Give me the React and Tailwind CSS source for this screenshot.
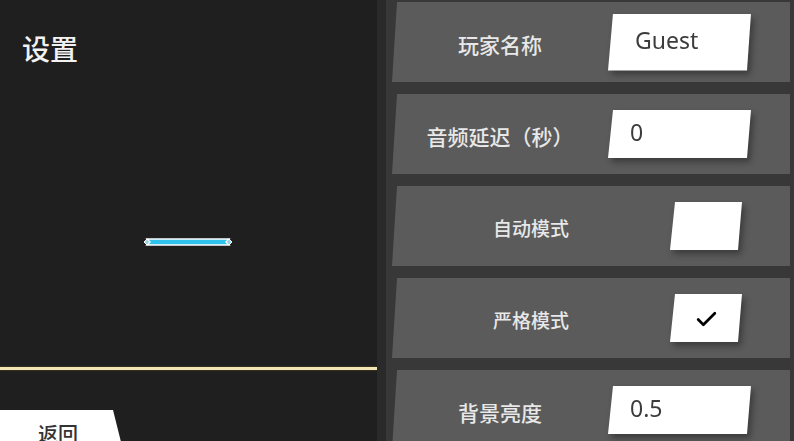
import React from "react";
import { Check } from "lucide-react";

const SlantBox = ({ className = "", children }) => (
  <div className="drop-shadow-[3px_4px_3px_rgba(0,0,0,0.35)]">
    <div
      className={`bg-white [clip-path:polygon(5px_0,100%_0,calc(100%-4px)_100%,0_100%)] flex items-center ${className}`}
    >
      {children}
    </div>
  </div>
);

const Row = ({ label, children, small, right = "mr-[39px]" }) => (
  <div className="h-[80px] shrink-0 ml-[6px] mr-[4px] bg-[#5b5b5b] [clip-path:polygon(5px_0,100%_0,100%_100%,0_100%)] flex items-center">
    <div
      className={`flex-1 text-center ${small ? "text-[19px]" : "text-[21px]"} leading-[24px] font-medium text-[#e8e8e8] pt-[4px]`}
    >
      {label}
    </div>
    <div className={right}>{children}</div>
  </div>
);

const TextField = ({ value, tall }) => (
  <SlantBox className={`w-[143px] ${tall ? "h-[57px] pl-[27px]" : "h-[48px] pl-[22px]"}`}>
    <span className="text-[23px] leading-[26px] text-[#3c3c3c] font-['Noto_Sans',sans-serif] -mt-[5px]">
      {value}
    </span>
  </SlantBox>
);

const Toggle = ({ checked }) => (
  <SlantBox className="w-[72px] h-[48px] justify-center">
    {checked && <Check size={25} strokeWidth={2.6} className="text-black mt-[2px]" />}
  </SlantBox>
);

function Bar() {
  return (
    <svg width="94" height="12" viewBox="0 0 94 12">
      <path d="M6 3 H88 L85 6 L88 9 H6 L9 6 Z" fill="#2ec2ec" stroke="#ffffff" strokeWidth="1.4" />
      <path d="M3 6 L6 3 L9 6 L6 9 Z" fill="#9fd4e4" stroke="#ffffff" strokeWidth="1" />
      <path d="M85 6 L88 3 L91 6 L88 9 Z" fill="#9fd4e4" stroke="#ffffff" strokeWidth="1" />
    </svg>
  );
}

export default function App() {
  return (
    <div className="w-[794px] h-[441px] flex overflow-hidden font-['Noto_Sans_CJK_SC','Noto_Sans',sans-serif] bg-[#1f1f1f]">
      <div className="w-[377px] h-full bg-[#1f1f1f] flex flex-col overflow-hidden">
        <div className="shrink-0 pt-[32px] pl-[22px] text-[28px] leading-[32px] font-medium text-[#f2f2f2]">设置</div>
        <div className="shrink-0 mt-[172px] flex justify-center h-[12px] pr-[2px]">
          <Bar />
        </div>
        <div className="shrink-0 mt-[119px] h-[3px] bg-[#f2e7b4] shadow-[0_0_2px_rgba(120,100,40,0.8)]" />
        <div className="shrink-0 mt-[40px] w-[124px] h-[44px] bg-white [clip-path:polygon(0_0,113px_0,100%_100%,0_100%)] flex justify-center pr-[8px] pt-[12px]">
          <span className="text-[20px] leading-[24px] text-[#333333] font-medium">返回</span>
        </div>
      </div>
      <div className="flex-1 h-full bg-[#383838] border-l-[9px] border-[#2a2a2a] pt-[2px] flex flex-col gap-[12px] overflow-hidden">
        <Row label="玩家名称">
          <TextField value="Guest" tall />
        </Row>
        <Row label="音频延迟（秒）">
          <TextField value="0" />
        </Row>
        <Row label="自动模式" small right="mr-[48px]">
          <Toggle />
        </Row>
        <Row label="严格模式" small right="mr-[48px]">
          <Toggle checked />
        </Row>
        <Row label="背景亮度">
          <TextField value="0.5" />
        </Row>
      </div>
    </div>
  );
}
